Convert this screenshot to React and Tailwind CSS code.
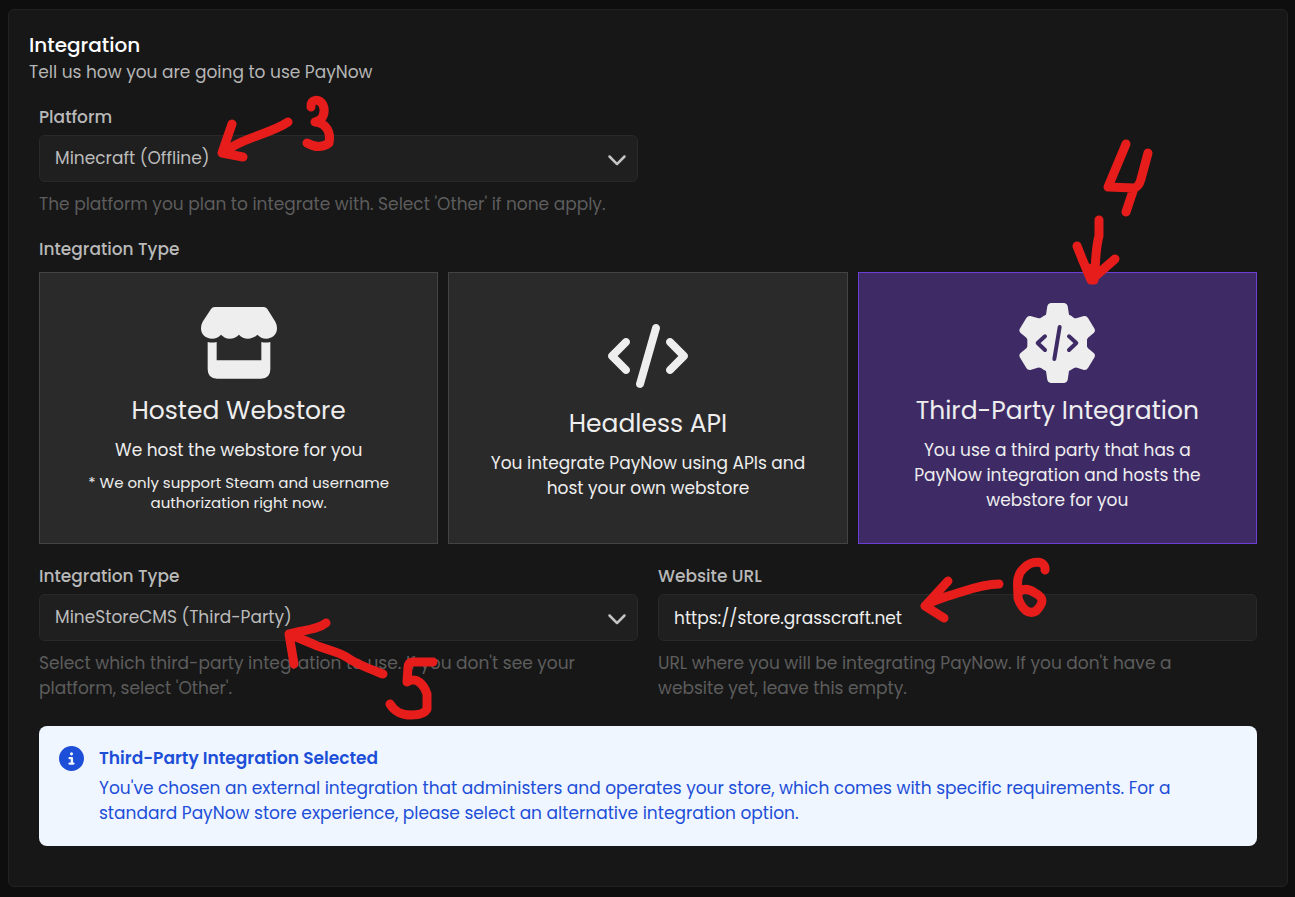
import { useState } from "react";
import { FaChevronDown, FaCircleInfo, FaCode } from "react-icons/fa6";

function StoreIcon() {
  return (
    <svg viewBox="54 39 240 240" className="size-20" fill="currentColor" aria-hidden="true">
      <path d="M101 51H248Q255 51 259 57L283 95Q288 104 288 115C288 133 274 146 256 146C245 146 236 141 229 134C221 142 212 146 201 146C190 146 181 142 174 134C166 142 157 146 146 146C136 146 127 141 120 134C113 142 104 146 93 146C74 146 60 133 60 115Q60 104 65 95L90 57Q94 51 101 51Z" />
      <path d="M80 156Q93 159 107 156V211H241V156Q254 159 268 156V238Q268 266 240 266H108Q80 266 80 238Z" />
    </svg>
  );
}

function GearCodeIcon() {
  return (
    <svg viewBox="51 39 240 240" className="size-20" aria-hidden="true">
      <path
        fill="currentColor"
        d="M142 48Q144 40 152 39H193Q201 40 203 48L207 74Q213 76 221 83Q226 86 231 84L252 78Q260 77 264 84L284 117Q287 123 282 128L264 143Q260 147 261 152V166Q260 171 264 175L282 190Q287 195 284 201L264 234Q260 241 252 240L231 233Q226 231 221 235Q213 240 207 243L203 270Q201 278 193 279H152Q144 278 142 270L138 243Q131 240 123 234Q118 231 113 233L91 240Q83 241 79 234L59 201Q56 195 61 190L79 175Q83 171 82 166V152Q83 147 79 143L61 128Q56 123 59 117L79 84Q83 77 91 78L113 84Q118 86 123 83Q131 77 138 74Z"
      />
      <path
        d="M135 139L113 159L135 180M179 111L163 207M207 139L229 159L207 180"
        className="stroke-[#3e2b66]"
        fill="none"
        strokeWidth="12"
        strokeLinecap="round"
        strokeLinejoin="round"
      />
    </svg>
  );
}

function Field({ id, label, help, children }) {
  return (
    <div className="flex flex-col">
      <label htmlFor={id} className="mb-[5px] text-[17px] leading-[25px] font-medium text-[#b9b9b9]">
        {label}
      </label>
      {children}
      <p className="mt-[10px] pr-5 text-[17px] leading-[25px] text-[#5d5d5d]">{help}</p>
    </div>
  );
}

function SelectBox({ id, options }) {
  return (
    <div className="grid items-center">
      <select
        id={id}
        className="col-start-1 row-start-1 h-[47px] w-full appearance-none rounded-md border border-[#292929] bg-[#1f1f1f] pr-12 pl-[15px] text-[17px] text-[#bcbcbc] outline-none"
      >
        {options.map((o) => (
          <option key={o}>{o}</option>
        ))}
      </select>
      <FaChevronDown className="pointer-events-none col-start-1 row-start-1 mr-[11px] size-5 justify-self-end text-[#c4c4c4]" />
    </div>
  );
}

const types = [
  {
    name: "Hosted Webstore",
    icon: <StoreIcon />,
    text: "We host the webstore for you",
    note: "* We only support Steam and username authorization right now.",
  },
  {
    name: "Headless API",
    icon: <FaCode className="size-20" />,
    text: "You integrate PayNow using APIs and host your own webstore",
  },
  {
    name: "Third-Party Integration",
    icon: <GearCodeIcon />,
    text: "You use a third party that has a PayNow integration and hosts the webstore for you",
  },
];

function TypeCard({ type, selected, onSelect }) {
  const tone = selected ? "border-[#6b3fd6] bg-[#3e2b66]" : "border-[#444444] bg-[#2a2a2a]";
  return (
    <button
      type="button"
      aria-pressed={selected}
      onClick={onSelect}
      className={`flex min-h-[272px] flex-col items-center justify-center gap-[10px] border px-8 text-[#eeeeee] ${tone}`}
    >
      {type.icon}
      <span className="text-[25px] leading-[35px]">{type.name}</span>
      <span className="text-[17px] leading-[25px]">{type.text}</span>
      {type.note && <span className="text-[15px] leading-5">{type.note}</span>}
    </button>
  );
}

function Annotations() {
  return (
    <svg
      className="pointer-events-none absolute top-0 left-0 h-[897px] w-[1295px] stroke-[#e71d1c]"
      viewBox="0 0 1295 897"
      fill="none"
      strokeWidth="9"
      strokeLinecap="round"
      strokeLinejoin="round"
      aria-hidden="true"
    >
      <path d="M288 122C272 133 247 137 232 147L222 153L232 124M222 153L243 157" />
      <path d="M311 107C310 99 319 98 323 105C326 112 323 121 315 122C327 123 331 133 329 143C322 148 314 147 307 143" />
      <path d="M1126 144L1108 187L1134 188Q1139 187 1141 179L1148 153M1134 188L1126 212" />
      <path d="M1099 220V236C1095 250 1096 265 1094 280L1091 280M1077 246L1083 261L1091 280L1115 259M1088 268L1094 276" />
      <path d="M383 674C370 669 356 664 348 658C335 650 325 650 313 644L289 634C303 630 317 630 326 623M289 634L294 664" />
      <path d="M433 662H413Q408 662 408 668L407 682C417 676 424 685 427 694V709Q424 715 411 715C401 715 395 712 390 704" />
      <path d="M999 584C980 584 963 592 948 596L934 601L925 606L948 581M925 606L944 618" />
      <path d="M1045 570C1046 560 1032 560 1024 568C1015 576 1018 586 1018 598C1022 610 1029 615 1036 611C1045 602 1043 597 1035 593Q1027 587 1020 591" />
    </svg>
  );
}

export default function App() {
  const [active, setActive] = useState(2);
  const [url, setUrl] = useState("https://store.grasscraft.net");
  return (
    <div className="relative min-h-screen overflow-x-hidden bg-[#0e0e0e] pt-[9px] pr-[7px] pb-[10px] pl-2 font-[Poppins,Inter,sans-serif]">
      <main className="rounded-md border border-[#222222] bg-[#171717] pt-5 pb-10">
        <header className="px-5">
          <h1 className="text-[20px] leading-[30px] font-medium text-white">Integration</h1>
          <p className="text-[17px] leading-[25px] text-[#b5b5b5]">Tell us how you are going to use PayNow</p>
        </header>
        <form className="mt-5 flex flex-col gap-5 px-[30px]">
          <div className="grid grid-cols-2 gap-5">
            <Field
              id="platform"
              label="Platform"
              help="The platform you plan to integrate with. Select 'Other' if none apply."
            >
              <SelectBox id="platform" options={["Minecraft (Offline)", "Other"]} />
            </Field>
          </div>
          <div role="group" aria-labelledby="type-label" className="flex flex-col gap-[10px]">
            <h2 id="type-label" className="text-[17px] leading-[25px] font-medium text-[#b9b9b9]">
              Integration Type
            </h2>
            <div className="grid grid-cols-3 gap-[10px]">
              {types.map((t, i) => (
                <TypeCard key={t.name} type={t} selected={i === active} onSelect={() => setActive(i)} />
              ))}
            </div>
          </div>
          <div className="grid grid-cols-2 gap-5">
            <Field
              id="provider"
              label="Integration Type"
              help="Select which third-party integration to use. If you don't see your platform, select 'Other'."
            >
              <SelectBox id="provider" options={["MineStoreCMS (Third-Party)", "Other"]} />
            </Field>
            <Field
              id="url"
              label="Website URL"
              help="URL where you will be integrating PayNow. If you don't have a website yet, leave this empty."
            >
              <input
                id="url"
                type="text"
                value={url}
                onChange={(e) => setUrl(e.target.value)}
                className="h-[47px] w-full rounded-md border border-[#292929] bg-[#1f1f1f] px-[15px] text-[17px] text-[#eeeeee] outline-none"
              />
            </Field>
          </div>
          <div role="status" className="mt-[5px] flex gap-[15px] rounded-lg bg-[#eff6ff] p-5 text-[#1d4ed8]">
            <FaCircleInfo className="size-[25px] shrink-0" />
            <div className="flex flex-col gap-[5px] text-[17px] leading-[25px]">
              <h3 className="font-semibold">Third-Party Integration Selected</h3>
              <p>
                You've chosen an external integration that administers and operates your store, which comes with
                specific requirements. For a standard PayNow store experience, please select an alternative
                integration option.
              </p>
            </div>
          </div>
        </form>
      </main>
      <Annotations />
    </div>
  );
}
